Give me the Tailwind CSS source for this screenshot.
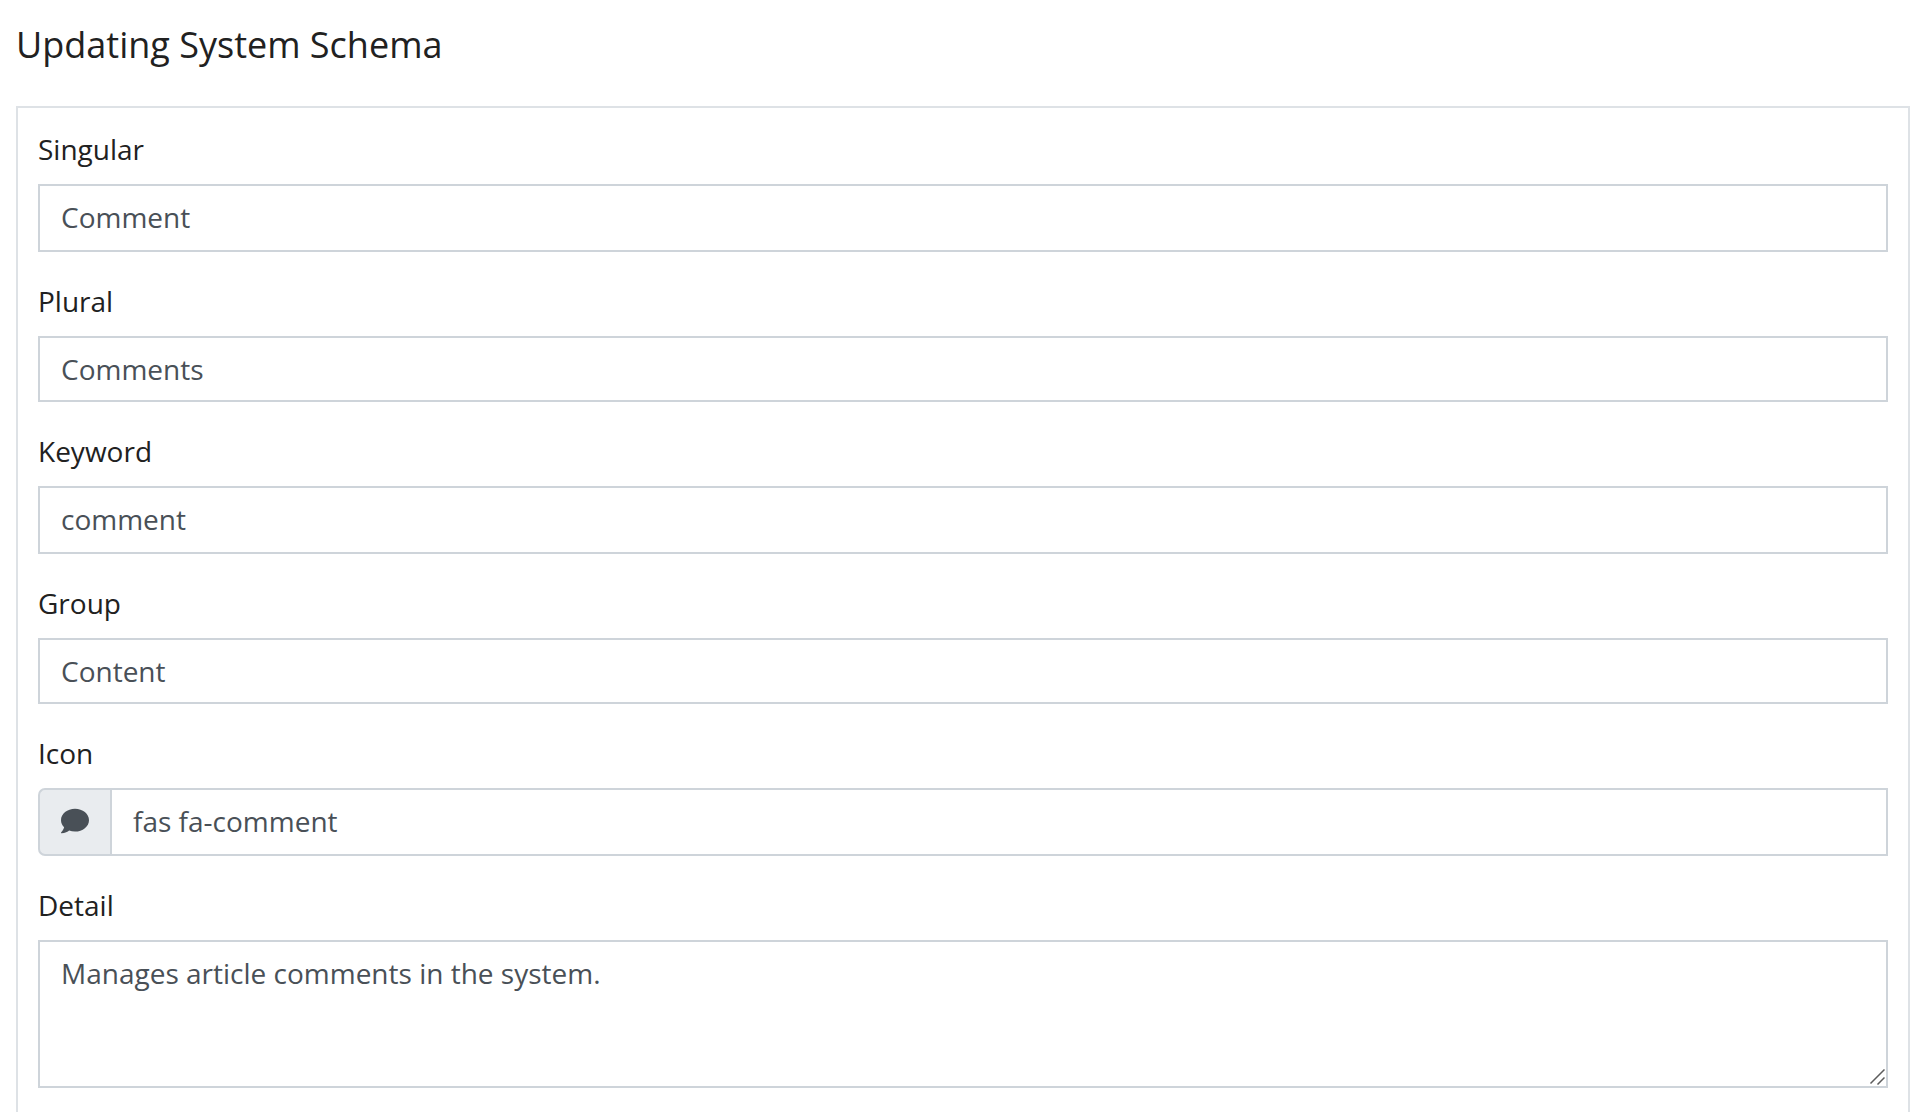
<!DOCTYPE html>
<html lang="en">
<head>
<meta charset="utf-8">
<title>Updating System Schema</title>
<script src="https://cdn.jsdelivr.net/npm/@tailwindcss/browser@4"></script>
</head>
<body class="h-[1112px] overflow-hidden bg-white font-['Open_Sans',sans-serif] text-[28px] leading-[42px] text-[#212121]">
<main class="pl-4 pr-[10px] pt-5">
  <h1 class="h-[86px] text-[36px] leading-[50px]">Updating System Schema</h1>
  <form class="flex h-[1040px] flex-col gap-7 border-2 border-[#dee2e6] p-5">
    <div class="flex flex-col gap-[14px]">
      <label for="singular">Singular</label>
      <input id="singular" value="Comment" class="h-[68px] border-2 border-[#ced4da] px-[21px] pt-[10px] pb-3 text-[#495057]">
    </div>
    <div class="flex flex-col gap-[14px]">
      <label for="plural">Plural</label>
      <input id="plural" value="Comments" class="h-[66px] border-2 border-[#ced4da] px-[21px] py-[10px] text-[#495057]">
    </div>
    <div class="flex flex-col gap-[14px]">
      <label for="keyword">Keyword</label>
      <input id="keyword" value="comment" class="h-[68px] border-2 border-[#ced4da] px-[21px] pt-[10px] pb-3 text-[#495057]">
    </div>
    <div class="flex flex-col gap-[14px]">
      <label for="group">Group</label>
      <input id="group" value="Content" class="h-[66px] border-2 border-[#ced4da] px-[21px] py-[10px] text-[#495057]">
    </div>
    <div class="flex flex-col gap-[14px]">
      <label for="icon">Icon</label>
      <div class="flex h-[68px]">
        <span class="flex w-[74px] shrink-0 items-center rounded-l-[7px] border-2 border-r-0 border-[#ced4da] bg-[#e9ecef] pb-[2px] pl-[21px]">
          <svg class="size-7 fill-[#495057]" viewBox="0 0 512 512"><path d="M256 32C114.600 32 0 125.100 0 240c0 49.600 21.400 95 57 130.700C44.500 421.100 2.700 466 2.200 466.500c-2.200 2.300-2.800 5.700-1.500 8.700S4.800 480 8 480c66.300 0 116-31.800 140.600-51.400 32.700 12.300 69 19.400 107.400 19.400 141.400 0 256-93.100 256-208S397.400 32 256 32z"/></svg>
        </span>
        <input id="icon" value="fas fa-comment" class="-ml-[2px] h-[68px] grow border-2 border-[#ced4da] px-[21px] pt-[10px] pb-3 text-[#495057]">
      </div>
    </div>
    <div class="flex flex-col gap-[14px]">
      <label for="detail">Detail</label>
      <div class="relative flex h-[148px]">
        <textarea id="detail" class="grow resize-none border-2 border-[#ced4da] px-[21px] py-[10px] text-[#495057]">Manages article comments in the system.</textarea>
        <svg class="absolute right-[3px] bottom-[3px] h-4 w-4" viewBox="0 0 16 16" fill="none" stroke="#5c5c5c" stroke-width="1.500"><path d="M1.500 14.500 15.500 .5M8.500 15.500 15.500 8.500"/></svg>
      </div>
    </div>
  </form>
</main>
</body>
</html>
